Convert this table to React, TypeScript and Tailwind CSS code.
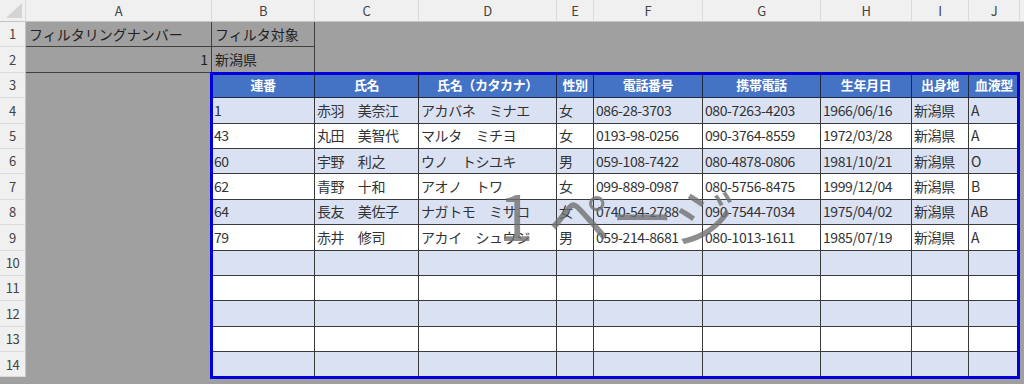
import { ReactNode } from 'react';

// 改ページプレビュー風のシート
const COLS = ['A', 'B', 'C', 'D', 'E', 'F', 'G', 'H', 'I', 'J'];

const HEAD = ['連番', '氏名', '氏名（カタカナ）', '性別', '電話番号', '携帯電話', '生年月日', '出身地', '血液型'];

const DATA: string[][] = [
  ['1', '赤羽　美奈江', 'アカバネ　ミナエ', '女', '086-28-3703', '080-7263-4203', '1966/06/16', '新潟県', 'A'],
  ['43', '丸田　美智代', 'マルタ　ミチヨ', '女', '0193-98-0256', '090-3764-8559', '1972/03/28', '新潟県', 'A'],
  ['60', '宇野　利之', 'ウノ　トシユキ', '男', '059-108-7422', '080-4878-0806', '1981/10/21', '新潟県', 'O'],
  ['62', '青野　十和', 'アオノ　トワ', '女', '099-889-0987', '080-5756-8475', '1999/12/04', '新潟県', 'B'],
  ['64', '長友　美佐子', 'ナガトモ　ミサコ', '女', '0740-54-2788', '090-7544-7034', '1975/04/02', '新潟県', 'AB'],
  ['79', '赤井　修司', 'アカイ　シュウジ', '男', '059-214-8681', '080-1013-1611', '1985/07/19', '新潟県', 'A'],
];

function Cell({ className = '', children }: { className?: string; children?: ReactNode }) {
  return <div className={`flex items-center overflow-hidden whitespace-nowrap ${className}`}>{children}</div>;
}

export default function App() {
  const rows: ReactNode[] = [];

  // 列見出し
  rows.push(
    <Cell key="corner" className="bg-[#f0f0f0] border-r border-b border-r-[#dadada] border-b-[#c4c4c4] justify-end items-end p-[3px]">
      <svg width="16" height="15" viewBox="0 0 16 15">
        <polygon points="16,0 16,15 0,15" fill="#d4d4d4" />
      </svg>
    </Cell>
  );
  COLS.forEach((c) =>
    rows.push(
      <Cell key={`h${c}`} className="bg-[#f0f0f0] border-r border-b border-r-[#dadada] border-b-[#c4c4c4] justify-center text-[13px] text-[#444]">
        {c}
      </Cell>
    )
  );
  rows.push(<Cell key="hfill" className="bg-[#f0f0f0] border-b border-b-[#c4c4c4]" />);

  for (let r = 1; r <= 14; r++) {
    rows.push(
      <Cell key={`r${r}`} className="bg-[#f0f0f0] border-r border-b border-r-[#c4c4c4] border-b-[#dadada] justify-center text-[13px] text-[#444]">
        {r}
      </Cell>
    );
    if (r <= 2) {
      rows.push(
        <Cell key={`a${r}`} className={`border-r border-b border-[#404040] px-[3px] text-[14px] tracking-normal text-[#222] ${r === 2 ? 'justify-end' : ''}`}>
          {r === 1 ? 'フィルタリングナンバー' : '1'}
        </Cell>
      );
      rows.push(
        <Cell key={`b${r}`} className="border-r border-b border-[#404040] px-[3px] text-[14px] tracking-normal text-[#222]">
          {r === 1 ? 'フィルタ対象' : '新潟県'}
        </Cell>
      );
      for (let i = 2; i < 10; i++) rows.push(<Cell key={`e${r}-${i}`} />);
    } else if (r === 3) {
      rows.push(<Cell key="a3" />);
      HEAD.forEach((h) =>
        rows.push(
          <Cell key={`th${h}`} className="bg-[#4472c4] border-r border-b border-[#1f2a40] justify-center text-[13px] font-bold text-white">
            {h}
          </Cell>
        )
      );
    } else {
      const d = DATA[r - 4];
      const bg = r % 2 === 0 ? 'bg-[#d9e1f2]' : 'bg-white';
      rows.push(<Cell key={`a${r}`} />);
      for (let i = 0; i < 9; i++) {
        rows.push(
          <Cell key={`d${r}-${i}`} className={`${bg} border-r border-b border-[#3a3a3a] px-[2px] text-[14px] text-[#333]`}>
            {d ? d[i] : ''}
          </Cell>
        );
      }
    }
    rows.push(<Cell key={`f${r}`} />);
  }

  return (
    <div className="relative w-[1024px] h-[384px] overflow-hidden bg-[#a0a0a0] font-['Noto_Sans_CJK_JP','Noto_Sans',sans-serif] tracking-[-0.4px]">
      <div className="grid grid-cols-[26px_186px_103px_104px_138px_37px_109px_118px_91px_57px_51px_1fr] grid-rows-[22px_repeat(14,25.4px)_1fr] h-full">
        {rows}
      </div>
      {/* 印刷範囲の枠 */}
      <div className="absolute left-[210px] top-[72px] w-[810px] h-[307px] border-[3px] border-[#0000dc] pointer-events-none" />
      {/* ページ番号の透かし */}
      <div className="absolute left-[213px] top-[75px] w-[804px] h-[301px] flex items-center justify-center pb-[24px] pointer-events-none">
        <span className="text-[63px] leading-none text-[rgba(112,112,112,0.8)] tracking-normal pl-[4px]">1 ページ</span>
      </div>
    </div>
  );
}
